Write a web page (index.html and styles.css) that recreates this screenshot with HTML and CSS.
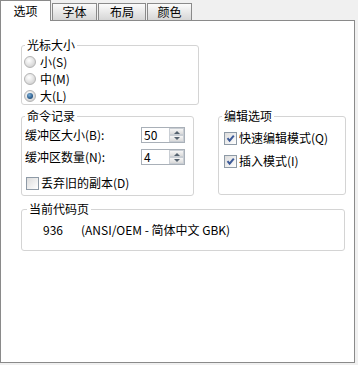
FILE: index.html
```html
<!DOCTYPE html>
<html lang="zh-CN">
<head>
<meta charset="utf-8">
<link rel="stylesheet" href="styles.css">
</head>
<body>
<div class="tabs">
  <div class="tab active">选项</div>
  <div class="tab t1">字体</div>
  <div class="tab t2">布局</div>
  <div class="tab t3">颜色</div>
</div>
<div class="panel">
  <fieldset class="group cursor">
    <legend>光标大小</legend>
    <div class="opt"><span class="radio"></span>小(S)</div>
    <div class="opt"><span class="radio"></span>中(M)</div>
    <div class="opt"><span class="radio checked"></span>大(L)</div>
  </fieldset>
  <div class="row">
    <fieldset class="group history">
      <legend>命令记录</legend>
      <div class="field">
        <span class="flabel">缓冲区大小(B):</span>
        <span class="spin"><span class="val">50</span><span class="btns"><span class="up"></span><span class="down"></span></span></span>
      </div>
      <div class="field f2">
        <span class="flabel">缓冲区数量(N):</span>
        <span class="spin"><span class="val">4</span><span class="btns"><span class="up"></span><span class="down"></span></span></span>
      </div>
      <div class="chk discard"><span class="box"></span>丢弃旧的副本(D)</div>
    </fieldset>
    <fieldset class="group edit">
      <legend>编辑选项</legend>
      <div class="chk"><span class="box on"><svg width="11" height="11" viewBox="0 0 11 11"><path d="M2.5 5.2 L4.6 7.6 L8.8 2.6" fill="none" stroke="#3d5a98" stroke-width="2"/></svg></span>快速编辑模式(Q)</div>
      <div class="chk c2"><span class="box on"><svg width="11" height="11" viewBox="0 0 11 11"><path d="M2.5 5.2 L4.6 7.6 L8.8 2.6" fill="none" stroke="#3d5a98" stroke-width="2"/></svg></span>插入模式(I)</div>
    </fieldset>
  </div>
  <fieldset class="group codepage">
    <legend>当前代码页</legend>
    <div class="cp"><span class="cpnum">936</span><span>(ANSI/OEM - 简体中文 GBK)</span></div>
  </fieldset>
</div>
</body>
</html>
```
FILE: styles.css
```css
html, body {
  margin: 0;
  padding: 0;
}
body {
  width: 358px;
  height: 365px;
  background: #f0f0f0;
  font-family: "Noto Sans CJK SC", "Liberation Sans", sans-serif;
  font-size: 12px;
  line-height: 14px;
  color: #000;
  overflow: hidden;
}
.tabs {
  display: flex;
  align-items: flex-end;
  height: 20px;
  position: relative;
  z-index: 2;
}
.tab {
  box-sizing: border-box;
  height: 17px;
  border: 1px solid #8a8a8a;
  border-bottom: none;
  background: linear-gradient(#fbfbfb, #d6d6d6);
  display: flex;
  align-items: center;
  justify-content: center;
  margin-left: 1px;
}
.tab.active {
  height: 21px;
  width: 51px;
  margin-left: 0;
  margin-bottom: -1px;
  background: #fff;
  padding-bottom: 1px;
}
.t1 { width: 45px; }
.t2 { width: 48px; }
.t3 { width: 45px; }
.panel {
  box-sizing: border-box;
  width: 355px;
  height: 343px;
  border: 1px solid #8a8a8a;
  background: #fff;
  padding: 17px 0 0 20px;
  display: flex;
  flex-direction: column;
  align-items: flex-start;
}
.group {
  margin: 0;
  min-width: 0;
  border: 1px solid #d4d4d4;
  border-radius: 3px;
  box-sizing: border-box;
}
.group legend {
  padding: 0 2px;
  line-height: 14px;
}
.cursor {
  width: 178px;
  padding: 1px 0 0 2px;
}
.cursor legend { margin-left: 1px; }
.opt {
  height: 17px;
  display: flex;
  align-items: center;
  gap: 4px;
}
.radio {
  box-sizing: border-box;
  width: 12px;
  height: 12px;
  border-radius: 50%;
  border: 1px solid #b4b4b4;
  background: radial-gradient(circle at 40% 35%, #ffffff 0%, #e6e6e6 45%, #c4c4c4 100%);
  display: inline-block;
  position: relative;
}
.radio.checked::after {
  content: "";
  position: absolute;
  left: 2px;
  top: 2px;
  width: 6px;
  height: 6px;
  border-radius: 50%;
  background: radial-gradient(circle at 40% 35%, #7fb0d8 0%, #2d5f8e 60%, #1e3f66 100%);
}
.row {
  display: flex;
  gap: 24px;
  margin-top: 4px;
  align-items: flex-start;
}
.history {
  width: 173px;
  height: 87px;
  padding: 4px 7px 0 3px;
}
.history legend { margin-left: 0; }
.field {
  display: flex;
  align-items: center;
  height: 16px;
}
.f2 { margin-top: 6px; }
.flabel {
  width: 116px;
  flex: none;
  white-space: nowrap;
}
.spin {
  box-sizing: border-box;
  display: flex;
  width: 44px;
  height: 16px;
  border: 1px solid #a9b0b8;
}
.val {
  flex: 1;
  padding-left: 2px;
  line-height: 14px;
}
.btns {
  width: 15px;
  display: flex;
  flex-direction: column;
}
.btns span {
  flex: 1;
  box-sizing: border-box;
  border: 1px solid #c9ced4;
  background: linear-gradient(#f6f6f6, #dadada);
  position: relative;
}
.btns .up::after, .btns .down::after {
  content: "";
  position: absolute;
  left: 4px;
  width: 0;
  height: 0;
  border-left: 3px solid transparent;
  border-right: 3px solid transparent;
}
.btns .up::after {
  top: 2px;
  border-bottom: 3px solid #55626f;
}
.btns .down::after {
  top: 1px;
  border-top: 3px solid #55626f;
}
.chk {
  display: flex;
  align-items: center;
  gap: 2px;
  height: 14px;
}
.discard {
  margin-top: 11px;
  padding-left: 1px;
}
.box {
  box-sizing: border-box;
  width: 13px;
  height: 13px;
  border: 1px solid #8e9aa6;
  background: linear-gradient(135deg, #dcdcdc, #f4f4f4 70%, #ffffff);
  display: inline-flex;
  align-items: center;
  justify-content: center;
  flex: none;
}
.edit {
  width: 128px;
  height: 86px;
  padding: 8px 0 0 5px;
}
.edit legend { margin-left: -2px; }
.c2 { margin-top: 9px; }
.codepage {
  margin-top: 6px;
  width: 324px;
  height: 49px;
  padding: 7px 0 0 21px;
}
.codepage legend { margin-left: -16px; }
.cp {
  display: flex;
  white-space: pre;
}
.cpnum {
  width: 38px;
}
```
